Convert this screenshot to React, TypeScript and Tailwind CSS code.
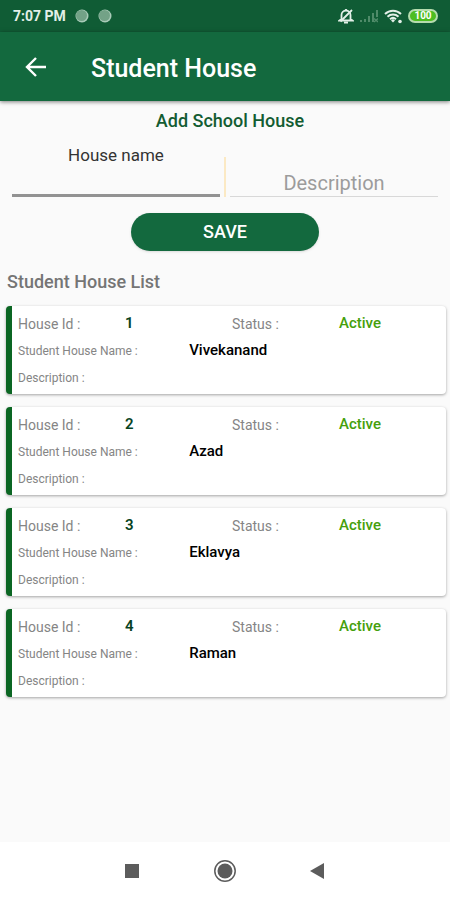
const houses = [
  { id: 1, name: 'Vivekanand', status: 'Active', description: '' },
  { id: 2, name: 'Azad', status: 'Active', description: '' },
  { id: 3, name: 'Eklavya', status: 'Active', description: '' },
  { id: 4, name: 'Raman', status: 'Active', description: '' },
];

function StatusBar() {
  return (
    <div className="flex h-8 items-center bg-[#105c35] pr-3 pl-[13px] text-[#e3f0e8]">
      <span className="text-sm font-bold">7:07 PM</span>
      <svg className="ml-2 h-4 w-10" viewBox="0 0 40 16">
        <circle cx="8" cy="8" r="6.5" fill="#a9cbb8" />
        <circle cx="7.5" cy="7.5" r="5.5" fill="#73a287" />
        <circle cx="31" cy="8" r="6.5" fill="#a9cbb8" />
        <circle cx="30.5" cy="7.5" r="5.5" fill="#73a287" />
      </svg>
      <div className="ml-auto flex items-center">
        <svg className="h-4 w-4" viewBox="0 0 16 16" fill="none" stroke="currentColor" strokeWidth="1.8">
          <path d="M3.5 11V7a4.500 4.500 0 0 1 9 0v4l2 1.500H1.500z" />
          <path d="M6 14.500h4M8 1v2M14 2 2.500 13.500" />
        </svg>
        <svg className="ml-1.5 h-4 w-[18px]" viewBox="0 0 18 16" fill="#4f8b69">
          <path d="M0 12h2v2H0zM4 11h2v3H4zM8 8h2v6H8zM12 5h2v9h-2zM16 2h2v7h-2z" />
          <path d="m14 10.500 4 3.500m0-3.500-4 3.500" stroke="#4f8b69" strokeWidth="1.4" />
        </svg>
        <svg className="ml-1.5 h-4 w-[18px]" viewBox="0 0 18 16" fill="none" stroke="currentColor" strokeWidth="2">
          <path d="M1 6a11.500 11.500 0 0 1 16 0M3.500 8.700a8 8 0 0 1 11 0M6 11.200a4.500 4.500 0 0 1 6 0" />
          <path d="m7 12.500 2-1.500 2 1.500-2 2z" fill="currentColor" stroke="none" />
          <circle cx="16" cy="13.500" r="1.800" fill="currentColor" stroke="none" />
        </svg>
        <span className="ml-1.5 flex h-[14px] w-[30px] items-center justify-center rounded-full border-2 border-[#b5dcae] bg-[#4dbd22] text-[10px] leading-none font-bold text-white">100</span>
      </div>
    </div>
  );
}

function HouseCard({ house }: { house: (typeof houses)[number] }) {
  return (
    <li className="rounded-sm border-l-6 border-[#0b6623] bg-white pt-1 pb-[3px] pl-1.5 text-xs text-[#858585] shadow-[0_1px_3px_rgba(0,0,0,0.35)]">
      <div className="grid h-[27px] grid-cols-4 items-center text-sm">
        <span>House Id :</span>
        <span className="text-[15px] font-semibold text-[#07431f]">{house.id}</span>
        <span>Status :</span>
        <span className="text-[15px] font-medium text-[#45a00c]">{house.status}</span>
      </div>
      <div className="grid h-[27px] grid-cols-5 items-center">
        <span className="col-span-2">Student House Name :</span>
        <span className="col-span-3 text-[15px] font-medium text-black">{house.name}</span>
      </div>
      <div className="grid h-[27px] grid-cols-5 items-center">
        <span className="col-span-2">Description :</span>
        <span className="col-span-3">{house.description}</span>
      </div>
    </li>
  );
}

export default function App() {
  return (
    <div className="flex min-h-screen flex-col bg-[#fafafa] font-['Roboto',sans-serif]">
      <StatusBar />
      <header className="flex h-[69px] items-center bg-[#13693e] pl-6 text-white shadow-[0_1px_4px_rgba(0,0,0,0.5)]">
        <button type="button" aria-label="Back">
          <svg className="h-6 w-6" viewBox="0 0 24 24" fill="none" stroke="currentColor" strokeWidth="2.4">
            <path d="M22 12H3.500M12 3 3 12l9 9" />
          </svg>
        </button>
        <h1 className="ml-[43px] pt-1 text-[25px] leading-8 font-medium">Student House</h1>
      </header>

      <main className="flex-1">
        <form className="flex flex-col items-center pt-2" onSubmit={(e) => e.preventDefault()}>
          <h2 className="pl-2.5 text-lg leading-6 font-medium text-[#135c32]">Add School House</h2>
          <div className="mt-2 flex w-full items-end px-3">
            <div className="flex flex-1 flex-col">
              <label htmlFor="house-name" className="text-center text-[17px] leading-7 text-[#333]">House name</label>
              <input id="house-name" className="h-7 w-full border-b-3 border-[#929292] text-center outline-none" />
            </div>
            <div className="mx-1 h-10 w-0.5 bg-[#fbe9c4]" />
            <input
              aria-label="Description"
              placeholder="Description"
              className="h-7 min-w-0 flex-1 border-b border-[#d8d8d8] text-center text-xl outline-none placeholder:text-[#9c9c9c]"
            />
          </div>
          <button type="submit" className="mt-4 h-[38px] w-[188px] rounded-full bg-[#13693e] text-lg font-medium text-white shadow-sm">SAVE</button>
        </form>

        <h2 className="mt-[19px] pl-[7px] text-lg leading-6 font-medium text-[#757575]">Student House List</h2>
        <ul className="mt-3 flex flex-col gap-[13px] pr-1 pl-1.5">
          {houses.map((house) => <HouseCard key={house.id} house={house} />)}
        </ul>
      </main>

      <nav className="flex h-[58px] items-center justify-center gap-[69px] bg-white text-[#5c5c5c]">
        <button type="button" aria-label="Recent apps">
          <svg className="h-6 w-6" viewBox="0 0 24 24" fill="currentColor"><path d="M5 5h14v14H5z" /></svg>
        </button>
        <button type="button" aria-label="Home">
          <svg className="h-6 w-6" viewBox="0 0 24 24">
            <circle cx="12" cy="12" r="10.2" fill="none" stroke="currentColor" strokeWidth="1.5" />
            <circle cx="12" cy="12" r="7.5" fill="currentColor" />
          </svg>
        </button>
        <button type="button" aria-label="Back to previous screen">
          <svg className="h-6 w-6" viewBox="0 0 24 24" fill="currentColor"><path d="M18 4v16L4 12z" /></svg>
        </button>
      </nav>
    </div>
  );
}
